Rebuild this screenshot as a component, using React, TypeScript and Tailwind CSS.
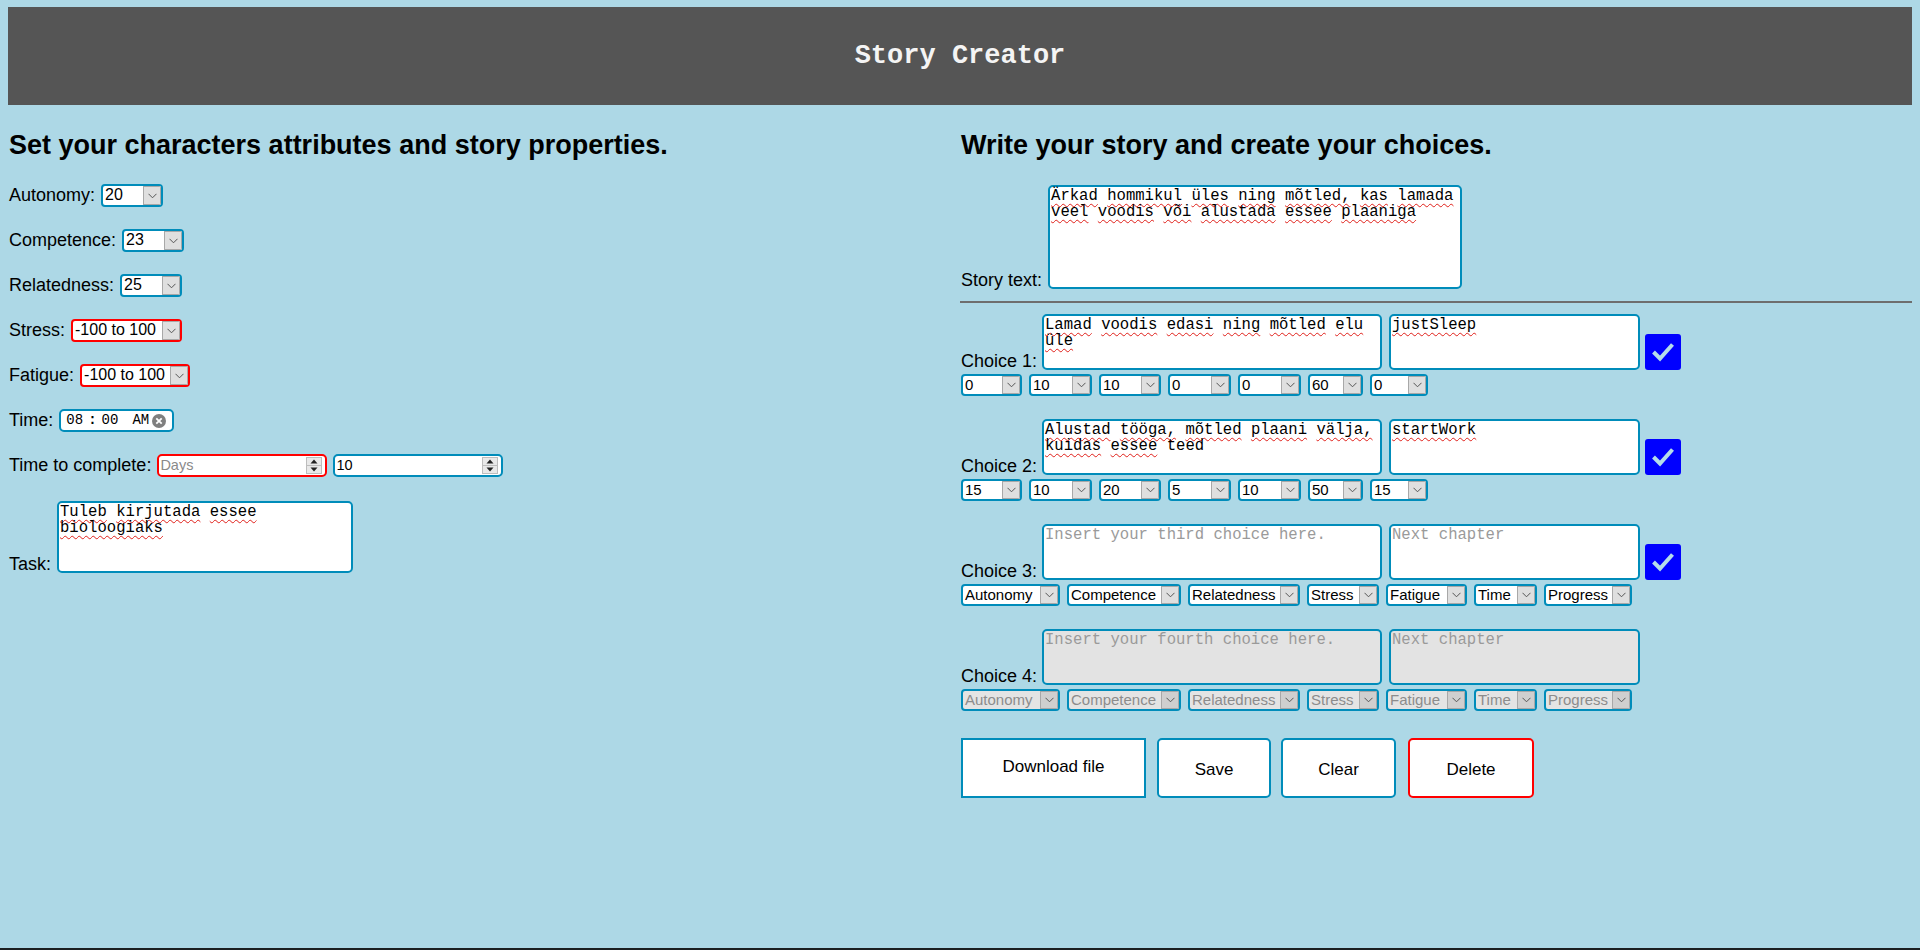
import React from 'react'

const sans = "font-['Liberation_Sans',Arial,sans-serif]"
const mono = "font-['Liberation_Mono','Courier_New',monospace]"

function Chevron() {
  return (
    <svg width="9" height="6" viewBox="0 0 9 6" aria-hidden="true">
      <polyline points="0.5,0.8 4.5,4.8 8.5,0.8" fill="none" stroke="#555" strokeWidth="1" />
    </svg>
  )
}

function Select({
  value,
  className,
  red,
  disabled,
  small,
}: {
  value: string
  className: string
  red?: boolean
  disabled?: boolean
  small?: boolean
}) {
  return (
    <div
      className={`flex shrink-0 items-stretch overflow-hidden rounded-[4px] border-2 ${
        small ? 'h-[22px]' : 'h-[23px]'
      } ${red ? 'border-[#ff0000]' : 'border-[#008CBA]'} ${
        disabled ? 'bg-[#e4e4e4] text-[#8c8c8c]' : 'bg-white text-black'
      } ${className}`}
    >
      <span
        className={`min-w-0 flex-1 overflow-hidden whitespace-nowrap pl-[2px] leading-[18px] ${
          small ? 'text-[15px]' : 'text-[16px]'
        }`}
      >
        {value}
      </span>
      <span
        className={`flex w-[18px] shrink-0 items-center justify-center border border-[#a8a8a8] ${
          disabled ? 'bg-[#cfcfcf]' : 'bg-[#dfdfdf]'
        }`}
      >
        <Chevron />
      </span>
    </div>
  )
}

// fake textarea so the spellcheck squiggles can be drawn per word
function TextBox({
  text,
  placeholder,
  className,
  disabled,
  plain = [],
}: {
  text?: string
  placeholder?: string
  className: string
  disabled?: boolean
  plain?: string[]
}) {
  return (
    <div
      className={`shrink-0 whitespace-pre-wrap break-words rounded-[5px] border-2 border-[#008CBA] px-[1px] pt-[1px] text-[15.6px] leading-[16px] ${mono} ${
        disabled ? 'bg-[#e3e3e3]' : 'bg-white'
      } ${className}`}
    >
      {text ? (
        text.split(' ').map((w, i) => (
          <React.Fragment key={i}>
            {i > 0 && ' '}
            <span
              className={
                plain.includes(w)
                  ? ''
                  : 'underline decoration-[#e0201a] decoration-wavy decoration-1 underline-offset-[3px]'
              }
            >
              {w}
            </span>
          </React.Fragment>
        ))
      ) : (
        <span className="text-[#9a9a9a]">{placeholder}</span>
      )}
    </div>
  )
}

function Spinner() {
  return (
    <svg width="16" height="17" viewBox="0 0 16 17" aria-hidden="true">
      <rect x="0.5" y="0.5" width="15" height="16" fill="#e9e9e9" stroke="#bdbdbd" />
      <line x1="1" y1="8.5" x2="15" y2="8.5" stroke="#bdbdbd" />
      <polygon points="8,2.5 11.5,6.5 4.5,6.5" fill="#222" />
      <polygon points="4.5,10.5 11.5,10.5 8,14.5" fill="#222" />
    </svg>
  )
}

function NumberBox({ value, placeholder, red }: { value?: string; placeholder?: string; red?: boolean }) {
  return (
    <div
      className={`flex h-[23px] w-[170px] items-center rounded-[5px] border-2 bg-white pl-[1px] pr-[3px] text-[14.5px] ${
        red ? 'border-[#ff0000]' : 'border-[#008CBA]'
      }`}
    >
      <span className={`flex-1 ${value ? 'text-black' : 'text-[#8a8a8a]'}`}>{value ?? placeholder}</span>
      <Spinner />
    </div>
  )
}

function Check() {
  return (
    <div className="flex h-[36px] w-[36px] shrink-0 items-center justify-center rounded-[3px] bg-[#0000ff]">
      <svg width="26" height="22" viewBox="0 0 26 22" aria-hidden="true">
        <polyline points="3.5,11 10,17.5 22.5,3.5" fill="none" stroke="#b5dcea" strokeWidth="4" strokeLinejoin="miter" />
      </svg>
    </div>
  )
}

const numWidths = ['w-[61px]', 'w-[63px]', 'w-[62px]', 'w-[63px]', 'w-[63px]', 'w-[55px]', 'w-[58px]']
const attrSelects: Array<[string, string]> = [
  ['Autonomy', 'w-[99px]'],
  ['Competence', 'w-[114px]'],
  ['Relatedness', 'w-[112px]'],
  ['Stress', 'w-[72px]'],
  ['Fatigue', 'w-[81px]'],
  ['Time', 'w-[63px]'],
  ['Progress', 'w-[88px]'],
]

interface Choice {
  label: string
  text?: string
  placeholder: string
  next?: string
  values?: string[]
  plain?: string[]
  disabled?: boolean
}

const choices: Choice[] = [
  {
    label: 'Choice 1:',
    text: 'Lamad voodis edasi ning mõtled elu üle',
    placeholder: '',
    next: 'justSleep',
    values: ['0', '10', '10', '0', '0', '60', '0'],
  },
  {
    label: 'Choice 2:',
    text: 'Alustad tööga, mõtled plaani välja, kuidas essee teed',
    placeholder: '',
    next: 'startWork',
    values: ['15', '10', '20', '5', '10', '50', '15'],
    plain: ['teed'],
  },
  { label: 'Choice 3:', placeholder: 'Insert your third choice here.' },
  { label: 'Choice 4:', placeholder: 'Insert your fourth choice here.', disabled: true },
]

export default function App() {
  const leftRows: Array<[string, string, string, boolean]> = [
    ['Autonomy:', '20', 'w-[62px]', false],
    ['Competence:', '23', 'w-[62px]', false],
    ['Relatedness:', '25', 'w-[62px]', false],
    ['Stress:', '-100 to 100', 'w-[111px]', true],
    ['Fatigue:', '-100 to 100', 'w-[110px]', true],
  ]

  return (
    <div className={`flex min-h-screen flex-col bg-[#add8e6] text-black ${sans}`}>
      <div className="px-2 pt-[7px]">
        <header className="flex h-[98px] items-center justify-center bg-[#555555]">
          <h1 className={`text-[27px] font-bold text-[#f4f4f4] ${mono}`}>Story Creator</h1>
        </header>

        <div className="grid grid-cols-2">
          {/* attributes */}
          <section className="pt-[26px]">
            <h2 className="h-[28px] pl-[1px] text-[27px] font-bold leading-[28px]">
              Set your characters attributes and story properties.
            </h2>
            <div className="mt-[25px] flex flex-col gap-[22px] pl-[1px] text-[18px]">
              {leftRows.map(([label, value, w, red]) => (
                <div key={label} className="flex h-[23px] items-center gap-[6px]">
                  <span>{label}</span>
                  <Select value={value} className={w} red={red} />
                </div>
              ))}
              <div className="flex h-[23px] items-center gap-[6px]">
                <span>Time:</span>
                <div className="flex h-[23px] w-[115px] items-center rounded-[5px] border-2 border-[#008CBA] bg-white pl-[5px] text-[14px] text-black">
                  <span className={mono}>08</span>
                  <span className={`ml-[5px] font-bold ${mono}`}>:</span>
                  <span className={`ml-[5px] ${mono}`}>00</span>
                  <span className={`ml-[14px] ${mono}`}>AM</span>
                  <svg className="ml-[3px]" width="14" height="14" viewBox="0 0 14 14" aria-hidden="true">
                    <circle cx="7" cy="7" r="7" fill="#7f7f7f" />
                    <path d="M4.3 4.3 L9.7 9.7 M9.7 4.3 L4.3 9.7" stroke="#fff" strokeWidth="1.8" />
                  </svg>
                </div>
              </div>
              <div className="flex h-[23px] items-center gap-[6px]">
                <span>Time to complete:</span>
                <NumberBox placeholder="Days" red />
                <NumberBox value="10" />
              </div>
              <div className="mt-[2px] flex items-end gap-[6px]">
                <span className="leading-[18px]">Task:</span>
                <TextBox text="Tuleb kirjutada essee bioloogiaks" className="h-[72px] w-[296px]" />
              </div>
            </div>
          </section>

          {/* story */}
          <section className="pt-[26px]">
            <h2 className="h-[28px] pl-[1px] text-[27px] font-bold leading-[28px]">
              Write your story and create your choices.
            </h2>
            <div className="mt-[26px] flex items-end gap-[6px] pl-[1px] text-[18px]">
              <span className="leading-[18px]">Story text:</span>
              <TextBox
                text="Ärkad hommikul üles ning mõtled, kas lamada veel voodis või alustada essee plaaniga"
                className="h-[104px] w-[414px]"
              />
            </div>
            <div className="mt-[12px] h-[2px] bg-[#6e6e6e]" />

            <div className="mt-[11px] flex flex-col gap-[23px] pl-[1px]">
              {choices.map((c) => (
                <div key={c.label} className="flex flex-col gap-[4px]">
                  <div className="flex items-end text-[18px]">
                    <span className="w-[81px] leading-[18px]">{c.label}</span>
                    <TextBox
                      text={c.text}
                      placeholder={c.placeholder}
                      plain={c.plain}
                      disabled={c.disabled}
                      className="h-[56px] w-[340px]"
                    />
                    <TextBox
                      text={c.next}
                      placeholder="Next chapter"
                      disabled={c.disabled}
                      className="ml-[7px] h-[56px] w-[251px]"
                    />
                    {!c.disabled && (
                      <div className="ml-[5px]">
                        <Check />
                      </div>
                    )}
                  </div>
                  <div className="flex gap-[7px]">
                    {c.values
                      ? c.values.map((v, i) => <Select key={i} value={v} className={numWidths[i]} small />)
                      : attrSelects.map(([name, w]) => (
                          <Select key={name} value={name} className={w} small disabled={c.disabled} />
                        ))}
                  </div>
                </div>
              ))}
            </div>

            <div className="mt-[27px] flex gap-[10px] pl-[1px] text-[17px]">
              <button className="h-[60px] w-[185px] border-2 border-[#008CBA] bg-white pb-[2px]">Download file</button>
              <button className="ml-[1px] h-[60px] w-[114px] rounded-[5px] border-2 border-[#008CBA] bg-white pt-[4px]">
                Save
              </button>
              <button className="h-[60px] w-[115px] rounded-[5px] border-2 border-[#008CBA] bg-white pt-[4px]">
                Clear
              </button>
              <button className="ml-[2px] h-[60px] w-[126px] rounded-[5px] border-2 border-[#ff0000] bg-white pt-[4px]">
                Delete
              </button>
            </div>
          </section>
        </div>
      </div>
      <div className="flex-1" />
      <div className="h-[2px] bg-[#1b1f22]" />
    </div>
  )
}
